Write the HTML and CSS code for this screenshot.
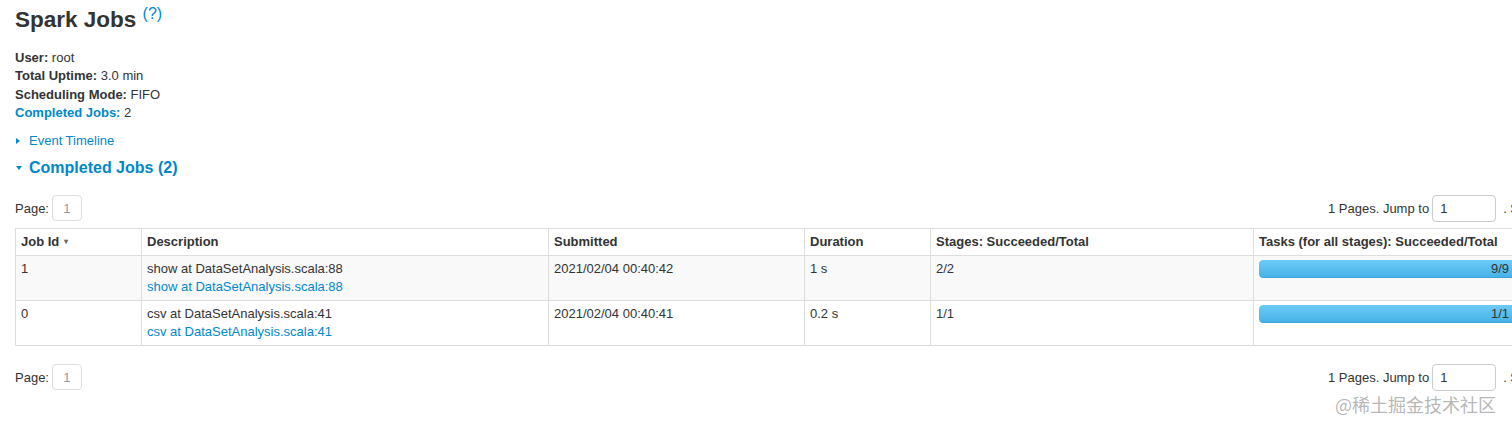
FILE: index.html
```html
<!DOCTYPE html>
<html>
<head>
<meta charset="utf-8">
<title>Spark Jobs</title>
<link rel="stylesheet" href="styles.css">
</head>
<body>
<div class="page">
  <h3 class="title">Spark Jobs <sup><a class="help" href="#">(?)</a></sup></h3>

  <ul class="summary">
    <li><strong>User:</strong> root</li>
    <li><strong>Total Uptime:</strong> 3.0 min</li>
    <li><strong>Scheduling Mode: </strong>FIFO</li>
    <li><a class="link-strong" href="#">Completed Jobs:</a> 2</li>
  </ul>

  <div class="toggle"><span class="arrow-closed"></span><a href="#">Event Timeline</a></div>

  <h4 class="section-head"><span class="arrow-open"></span><a href="#">Completed Jobs (2)</a></h4>

  <div class="pager">
    <div class="pager-left"><span>Page:</span><span class="page-box">1</span></div>
    <div class="pager-right">
      <span>1 Pages. Jump to</span>
      <span class="input wide">1</span>
      <span class="after-input">. Show</span>
      <span class="input wide">100</span>
      <span>items in a page.</span>
      <span class="btn">Go</span>
    </div>
  </div>

  <table class="jobs">
    <colgroup>
      <col class="c-id"><col class="c-desc"><col class="c-sub"><col class="c-dur"><col class="c-stage"><col class="c-task">
    </colgroup>
    <thead>
      <tr>
        <th>Job Id <span class="caret">&#9662;</span></th>
        <th>Description</th>
        <th>Submitted</th>
        <th>Duration</th>
        <th>Stages: Succeeded/Total</th>
        <th>Tasks (for all stages): Succeeded/Total</th>
      </tr>
    </thead>
    <tbody>
      <tr class="odd">
        <td>1</td>
        <td><div>show at DataSetAnalysis.scala:88</div><a href="#">show at DataSetAnalysis.scala:88</a></td>
        <td>2021/02/04 00:40:42</td>
        <td>1 s</td>
        <td>2/2</td>
        <td><div class="progress"><span class="progress-text">9/9</span><div class="bar" style="width:100%"></div></div></td>
      </tr>
      <tr>
        <td>0</td>
        <td><div>csv at DataSetAnalysis.scala:41</div><a href="#">csv at DataSetAnalysis.scala:41</a></td>
        <td>2021/02/04 00:40:41</td>
        <td>0.2 s</td>
        <td>1/1</td>
        <td><div class="progress"><span class="progress-text">1/1</span><div class="bar" style="width:100%"></div></div></td>
      </tr>
    </tbody>
  </table>

  <div class="pager bottom">
    <div class="pager-left"><span>Page:</span><span class="page-box">1</span></div>
    <div class="pager-right">
      <span>1 Pages. Jump to</span>
      <span class="input wide">1</span>
      <span class="after-input">. Show</span>
      <span class="input wide">100</span>
      <span>items in a page.</span>
      <span class="btn">Go</span>
    </div>
  </div>
</div>
<div class="watermark">@稀土掘金技术社区</div>
</body>
</html>
```

FILE: styles.css
```css
html, body {
  margin: 0;
  padding: 0;
  overflow: hidden;
  background: #fff;
}

body {
  font-family: "Liberation Sans", Arial, Helvetica, sans-serif;
  font-size: 13px;
  color: #333;
  width: 1512px;
  height: 428px;
  position: relative;
}

a {
  color: #0088cc;
  text-decoration: none;
}

.page {
  width: 1732px;
  padding: 6px 0 0 15px;
}

.title {
  margin: 0;
  font-size: 22.5px;
  line-height: 27px;
  font-weight: bold;
  color: #333;
}

.title sup {
  font-size: 16px;
  font-weight: normal;
  vertical-align: top;
  position: relative;
  top: -6px;
}

.help {
  color: #0088cc;
}

.summary {
  list-style: none;
  margin: 16px 0 0;
  padding: 0;
  line-height: 18.4px;
}

.summary strong,
.link-strong {
  font-weight: bold;
}

.toggle {
  margin-top: 9px;
  line-height: 18px;
  display: flex;
  align-items: center;
}

.arrow-closed {
  width: 0;
  height: 0;
  border-top: 3.5px solid transparent;
  border-bottom: 3.5px solid transparent;
  border-left: 4px solid #0088cc;
  margin: 0 9px 0 1px;
}

.section-head {
  margin: 8px 0 0;
  font-size: 16px;
  line-height: 20px;
  font-weight: bold;
  display: flex;
  align-items: center;
}

.arrow-open {
  width: 0;
  height: 0;
  border-left: 3.5px solid transparent;
  border-right: 3.5px solid transparent;
  border-top: 4px solid #0088cc;
  margin: 1px 7px 0 1px;
}

.pager {
  display: flex;
  justify-content: space-between;
  align-items: center;
  margin-top: 17px;
  height: 27px;
}

.pager.bottom {
  margin-top: 18px;
}

.pager-left,
.pager-right {
  display: flex;
  align-items: center;
  gap: 3px;
}

.after-input {
  margin-left: 4px;
}

.page-box {
  box-sizing: border-box;
  width: 30px;
  height: 26px;
  border: 1px solid #ddd;
  border-radius: 4px;
  color: #999;
  display: flex;
  align-items: center;
  justify-content: center;
}

.input {
  box-sizing: border-box;
  height: 27px;
  border: 1px solid #ccc;
  border-radius: 4px;
  padding: 0 7px;
  display: flex;
  align-items: center;
  color: #333;
}

.input.wide {
  width: 64px;
}

.btn {
  box-sizing: border-box;
  height: 27px;
  padding: 0 10px;
  border: 1px solid #ccc;
  border-radius: 4px;
  display: flex;
  align-items: center;
  background: #f5f5f5;
}

.jobs {
  margin-top: 6px;
  width: 100%;
  table-layout: fixed;
  border-collapse: collapse;
  border: 1px solid #ddd;
}

.c-id { width: 126px; }
.c-desc { width: 407px; }
.c-sub { width: 256px; }
.c-dur { width: 126px; }
.c-stage { width: 323px; }

.jobs th,
.jobs td {
  border: 1px solid #ddd;
  padding: 4px 5px;
  text-align: left;
  vertical-align: top;
}

.jobs th {
  font-weight: bold;
  line-height: 18px;
  height: 18px;
  color: #333;
}

.jobs td {
  line-height: 18px;
  height: 36px;
}

.caret {
  font-size: 8px;
  line-height: 0;
  color: #666;
  vertical-align: middle;
  margin-left: 1px;
}

.jobs tr.odd td {
  background: #f9f9f9;
}

.progress {
  position: relative;
  height: 18px;
  border-radius: 4px;
  background: #f5f5f5;
  overflow: hidden;
}

.bar {
  height: 100%;
  background-color: #3ec0ff;
  background-image: linear-gradient(to bottom, #6dcbf6, #45b1e8);
  border-radius: 4px;
  box-shadow: inset 0 -1px 0 rgba(0, 0, 0, 0.08);
}

.progress-text {
  position: absolute;
  left: 0;
  right: 0;
  top: 0;
  text-align: center;
  line-height: 18px;
  color: #333;
}

.watermark {
  position: absolute;
  left: 1335px;
  top: 391px;
  white-space: nowrap;
  font-family: "Noto Sans CJK SC", "Liberation Sans", sans-serif;
  font-size: 18px;
  line-height: 26px;
  letter-spacing: 0;
  color: rgba(120, 120, 120, 0.55);
}
```
